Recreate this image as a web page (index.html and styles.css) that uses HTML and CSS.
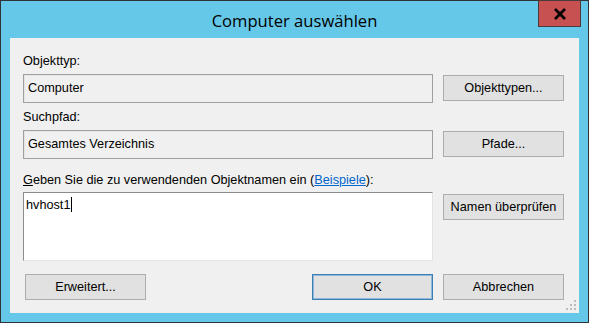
FILE: index.html
```html
<!DOCTYPE html>
<html lang="de">
<head>
    <meta charset="UTF-8">
    <title>Computer auswählen</title>
    <link rel="stylesheet" href="styles.css">
</head>
<body>
    <div class="window">
        <div class="titlebar">
            <span class="title">Computer auswählen</span>
            <div class="close-btn">
                <svg width="14" height="12" viewBox="0 0 14 12">
                    <path d="M2 1 L12 11 M12 1 L2 11" stroke="#000" stroke-width="2.6"/>
                </svg>
            </div>
        </div>

        <div class="client">
            <div class="form-grid">
                <label class="field-label">Objekttyp:</label>
                <span></span>
                <div class="readonly-field">Computer</div>
                <button class="btn">Objekttypen...</button>

                <label class="field-label">Suchpfad:</label>
                <span></span>
                <div class="readonly-field">Gesamtes Verzeichnis</div>
                <button class="btn">Pfade...</button>

                <label class="field-label names-label"><u>G</u>eben Sie die zu verwendenden Objektnamen ein (<a href="#" class="link">Beispiele</a>):</label>
                <span></span>
                <div class="names-box">hvhost1<span class="caret"></span></div>
                <button class="btn btn-top">Namen überprüfen</button>
            </div>

            <div class="footer">
                <button class="btn">Erweitert...</button>
                <div class="footer-right">
                    <button class="btn btn-default">OK</button>
                    <button class="btn">Abbrechen</button>
                </div>
            </div>

            <svg class="grip" width="11" height="11" viewBox="0 0 11 11">
                <rect x="8" y="0" width="2" height="2" fill="#bcbcbc"/>
                <rect x="4" y="4" width="2" height="2" fill="#bcbcbc"/>
                <rect x="8" y="4" width="2" height="2" fill="#bcbcbc"/>
                <rect x="0" y="8" width="2" height="2" fill="#bcbcbc"/>
                <rect x="4" y="8" width="2" height="2" fill="#bcbcbc"/>
                <rect x="8" y="8" width="2" height="2" fill="#bcbcbc"/>
            </svg>
        </div>
    </div>
</body>
</html>
```

FILE: styles.css
```css
* {
    margin: 0;
    padding: 0;
    box-sizing: border-box;
}

body {
    font-family: "Liberation Sans", Arial, sans-serif;
    font-size: 12.7px;
    color: #000;
    background: #fff;
}

.window {
    width: 589px;
    height: 323px;
    border: 1px solid #2e3336;
    background: #65c8e8;
    padding: 0 9px 9px 9px;
    display: flex;
    flex-direction: column;
}

.titlebar {
    position: relative;
    height: 37px;
    display: flex;
    align-items: center;
    justify-content: center;
}

.title {
    font-family: "Open Sans", "Liberation Sans", sans-serif;
    font-size: 16.6px;
    color: #000;
    margin-top: 2px;
}

.close-btn {
    position: absolute;
    top: -1px;
    right: -2px;
    width: 43px;
    height: 27px;
    background: #c75050;
    border: 1px solid #4b3a3a;
    display: flex;
    align-items: center;
    justify-content: center;
}

.client {
    position: relative;
    flex: 1;
    background: #f0f0f0;
    padding: 16px 15px 0 13px;
    display: flex;
    flex-direction: column;
}

.form-grid {
    display: grid;
    grid-template-columns: 410px 121px;
    column-gap: 10px;
    align-items: center;
}

.field-label {
    height: 20px;
    line-height: 15px;
}

.names-label {
    height: 19px;
    margin-top: 7px;
}

.link {
    color: #0066cc;
}

.readonly-field {
    height: 29px;
    border: 1px solid #a0a0a0;
    box-shadow: inset 1px 1px 0 #e4e4e4;
    padding: 0 4px;
    line-height: 27px;
    margin-bottom: 7px;
}

.form-grid .btn {
    margin-bottom: 8px;
}

.names-box {
    height: 69px;
    background: #fff;
    border: 1px solid #e3e3e3;
    border-top-color: #8b8b8b;
    border-left-color: #8b8b8b;
    padding: 4px 2px;
    line-height: 14px;
}

.caret {
    display: inline-block;
    width: 1px;
    height: 15px;
    background: #000;
    vertical-align: -3px;
    margin-left: 1px;
}

.btn-top {
    align-self: start;
    margin-top: 2px;
}

.btn {
    width: 121px;
    height: 26px;
    background: #e1e1e1;
    border: 1px solid #adadad;
    font-family: inherit;
    font-size: 12.7px;
    color: #000;
}

.btn-default {
    border: 1px solid #3c7fb1;
    box-shadow: inset 0 0 0 1px #8fb8dc;
}

.footer {
    display: flex;
    justify-content: space-between;
    margin-top: 13px;
    padding-left: 2px;
}

.footer-right {
    display: flex;
    gap: 10px;
}

.grip {
    position: absolute;
    right: 2px;
    bottom: 2px;
}
```
